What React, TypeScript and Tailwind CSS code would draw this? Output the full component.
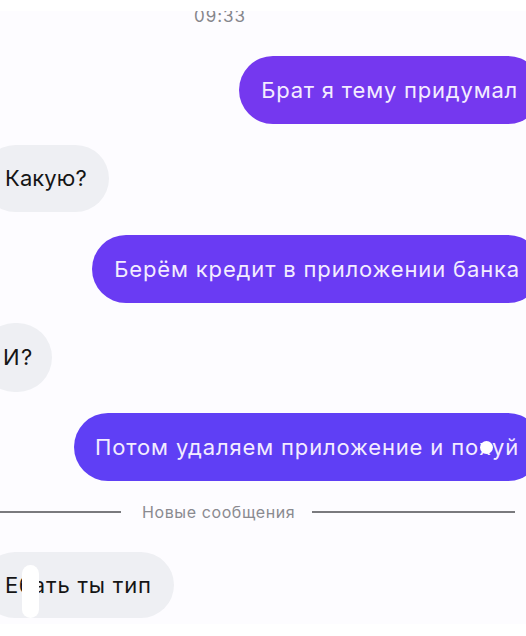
import React from "react";

const font = { fontFamily: "Inter, 'Noto Sans', sans-serif" };

export default function App() {
  return (
    <div className="w-[526px] h-[636px] overflow-hidden bg-[#fdfcff] flex flex-col" style={font}>
      <div className="h-[11px] bg-[#ffffff] shrink-0" />
      <div className="h-[15px] overflow-hidden flex justify-center shrink-0">
        <span className="-mt-[5px] text-[17px] leading-[20px] text-[#86868c] tracking-[1px] pr-[86px]">09:33</span>
      </div>

      <div className="flex flex-col mt-[30px]">
        <div className="flex justify-end">
          <div className="h-[68px] -mr-[16px] pl-[22px] pr-[24px] rounded-full bg-[#7538ef] text-[#f3ecff] text-[22px] tracking-[0.8px] flex items-center">
            Брат я тему придумал
          </div>
        </div>

        <div className="flex justify-start mt-[21px]">
          <div className="h-[67px] -ml-[18px] pl-[23px] pr-[22px] rounded-full bg-[#eeeff3] text-[#151515] text-[22px] tracking-[0.1px] flex items-center">
            Какую?
          </div>
        </div>

        <div className="flex justify-end mt-[23px]">
          <div className="h-[68px] -mr-[16px] pl-[22px] pr-[22px] rounded-full bg-[#6a3bf3] text-[#f3ecff] text-[22px] tracking-[0.85px] flex items-center">
            Берём кредит в приложении банка
          </div>
        </div>

        <div className="flex justify-start mt-[20px]">
          <div className="h-[69px] -ml-[20px] pl-[23px] pr-[18px] rounded-full bg-[#eeeff3] text-[#151515] text-[22px] tracking-[1.5px] flex items-center">
            И?
          </div>
        </div>

        <div className="flex justify-end mt-[21px]">
          <div className="h-[68px] -mr-[16px] pl-[21px] pr-[23px] rounded-full bg-[#5f3ff5] text-[#f3ecff] text-[22px] tracking-[0.85px] flex items-center">
            Потом удаляем приложение и по
            <span className="relative">
              х
              <span className="absolute left-[1px] top-[10px] w-[13px] h-[13px] rounded-full bg-white" />
            </span>
            уй
          </div>
        </div>

        <div className="flex items-center mt-[21px] h-[20px]">
          <div className="w-[121px] h-[2px] bg-[#7a7a7e]" />
          <span className="pl-[21px] pr-[17px] text-[16px] text-[#8a8a90] tracking-[0.6px]">Новые сообщения</span>
          <div className="w-[203px] h-[2px] bg-[#7a7a7e]" />
        </div>

        <div className="flex justify-start mt-[30px]">
          <div className="relative h-[66px] -ml-[18px] pl-[23px] pr-[22px] rounded-full bg-[#eeeff3] text-[#151515] text-[22px] tracking-[0.8px] flex items-center">
            Ебать ты тип
            <span className="absolute left-[40px] top-[13px] w-[17px] h-[53px] rounded-[9px] bg-white" />
          </div>
        </div>
      </div>
      <div className="flex-1 bg-[#ffffff] mt-[6px]" />
    </div>
  );
}
